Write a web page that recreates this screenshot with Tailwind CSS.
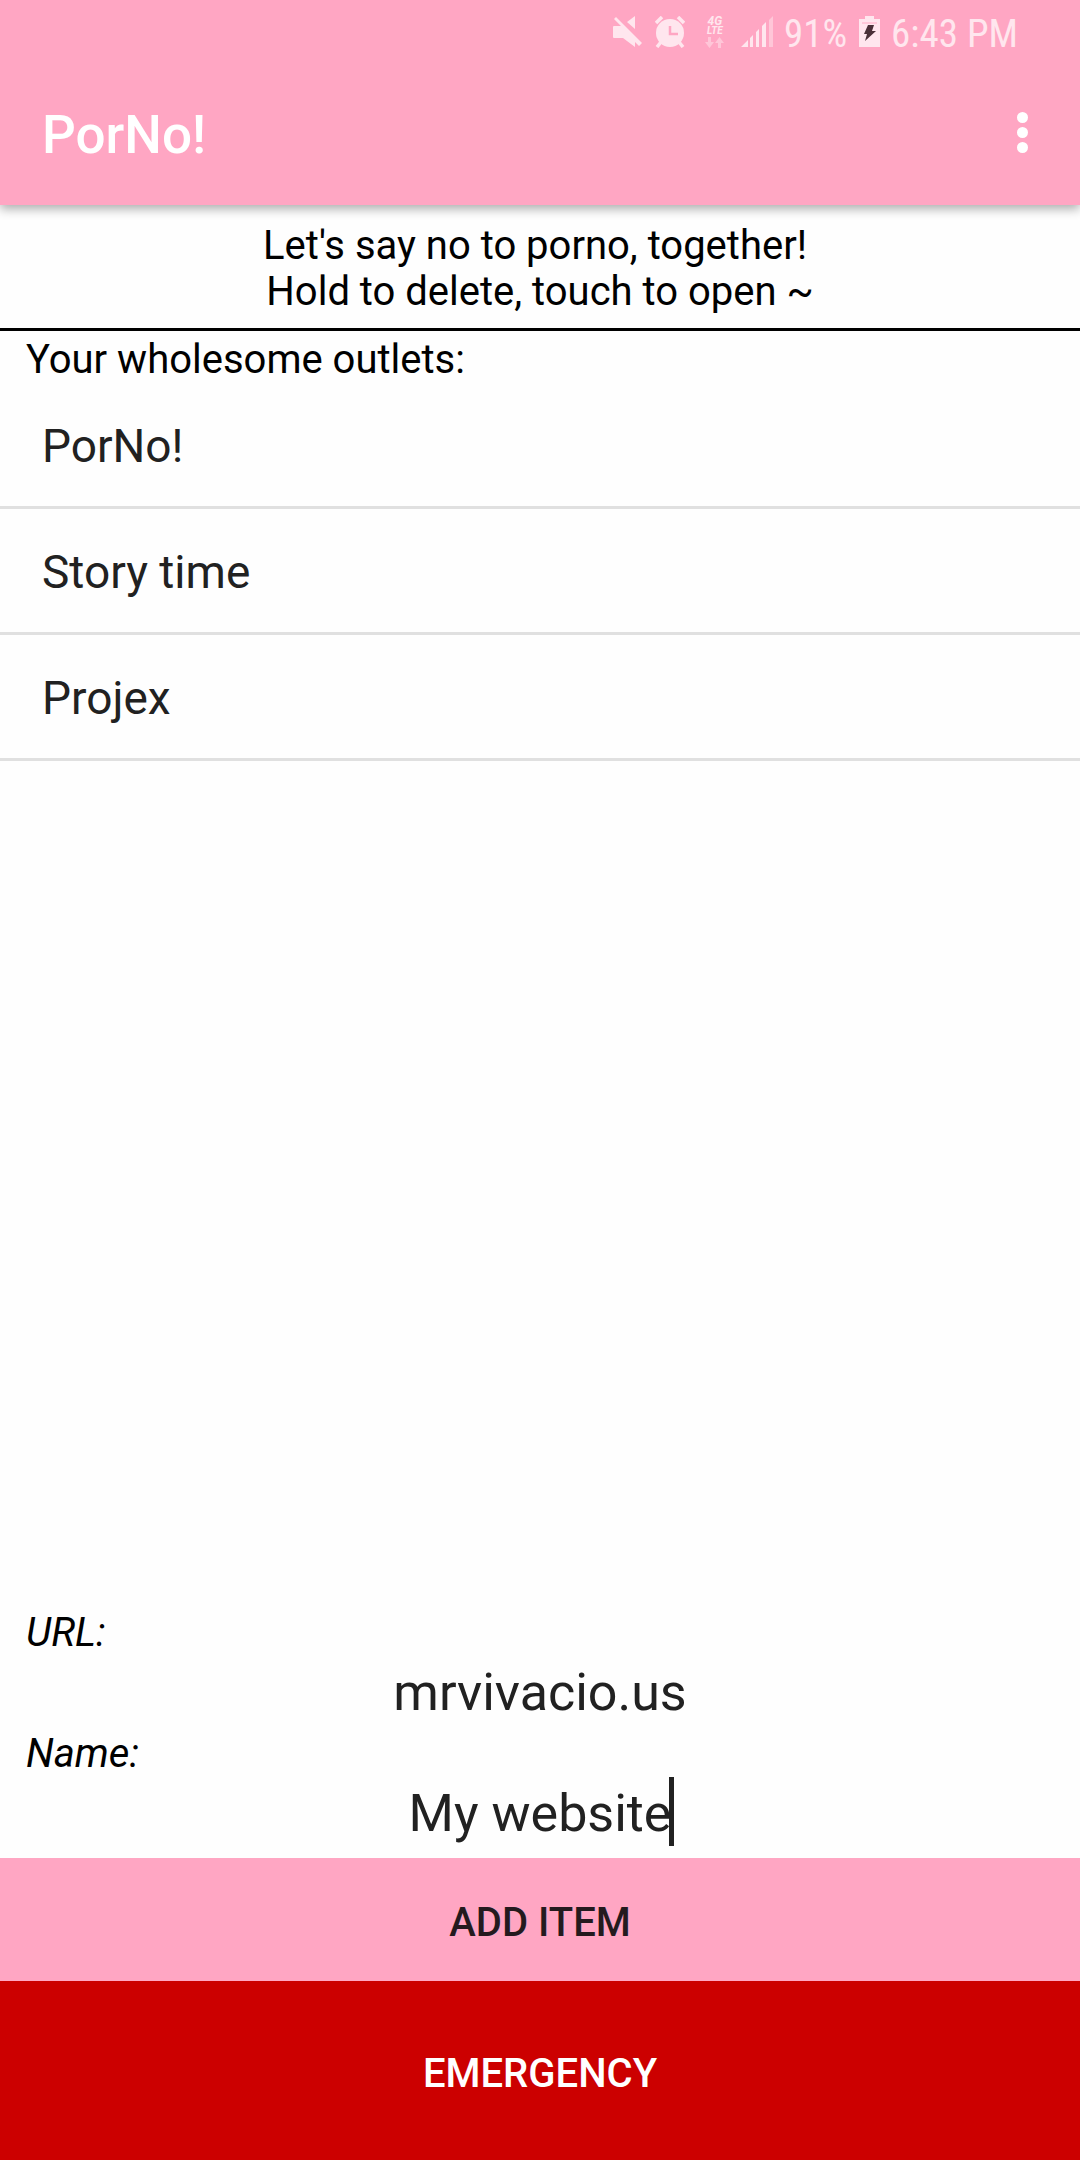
<!DOCTYPE html>
<html lang="en">
<head>
<meta charset="utf-8">
<meta name="viewport" content="width=device-width, initial-scale=1">
<title>PorNo!</title>
<script src="https://cdn.jsdelivr.net/npm/@tailwindcss/browser@4"></script>
</head>
<body class="flex min-h-screen flex-col bg-[#fefefe] font-['Roboto',sans-serif] text-[40px] leading-[46px] text-black">

<header class="relative bg-[#ffa6c3] text-white shadow-[0_4px_10px_rgba(0,0,0,0.32)]">
  <div class="flex h-[64px] items-center justify-end pr-[62px] font-['Roboto_Condensed','Roboto',sans-serif] text-[39px] text-[#ffe6ee]">
    <!-- sound off -->
    <svg class="mr-3 h-8 w-[30px]" viewBox="0 0 30 32" fill="currentColor" aria-label="Muted">
      <path d="M1 10h7L1 3l2-2 26 26-3 3-4-4v5L10 22H1a1 1 0 0 1-1-1V11a1 1 0 0 1 1-1zM22 0v13L14 6z"/>
    </svg>
    <!-- alarm -->
    <svg class="mr-5 h-8 w-[30px]" viewBox="0 0 30 32" aria-label="Alarm">
      <g stroke="currentColor" stroke-width="3.5" fill="none"><path d="M1 7l6-6M23 1l6 6M6 26l-4 5M24 26l4 5"/></g>
      <circle cx="15" cy="17" r="14" fill="currentColor"/>
      <path d="M15 10v8h8" stroke="#ffa6c3" stroke-width="2.5" fill="none"/>
    </svg>
    <!-- network type with data arrows -->
    <div class="mr-4 flex w-5 flex-col items-center font-['Roboto',sans-serif] text-[10px] leading-[9px] font-bold italic">
      <span class="text-[12px] leading-[10px]">4G</span><span>LTE</span>
      <svg class="mt-[2px] h-[11px] w-[19px] text-[#ffc6d8]" viewBox="0 0 19 11" fill="currentColor"><path d="M3 0h3v5h3l-4.500 6L0 5h3zM13 11h3V6h3l-4.500-6L10 6h3z"/></svg>
    </div>
    <!-- signal strength -->
    <svg class="mr-[11px] h-8 w-8" viewBox="0 0 32 32" fill="currentColor" aria-label="Signal">
      <path d="M0 31l7-7v7zM9 22l3-3v12H9zM15 16l3-3v18h-3zM21 10l4-4v25h-4z"/>
      <path d="M28 4l4-4v31h-4z" fill="#ffc6d8"/>
    </svg>
    <span class="mr-3 pt-1">91%</span>
    <!-- battery charging -->
    <svg class="mr-[11px] h-8 w-[21px]" viewBox="0 0 21 32" aria-label="Charging">
      <path d="M6 0h9v3h6v28H0V3h6z" fill="currentColor"/>
      <path d="M3 7h15" stroke="#ffbfd3" stroke-width="1.500"/>
      <path d="M9 9h6l-2 6h4L6 25l2-7H5z" fill="#4a3038"/>
    </svg>
    <span class="pt-1">6:43 PM</span>
  </div>
  <div class="flex h-[141px] items-center justify-between pr-[36px] pl-[42px]">
    <h1 class="text-[53px] leading-[60px] font-medium">PorNo!</h1>
    <button type="button" aria-label="More options" class="mb-1 flex w-11 flex-col items-center gap-1">
      <span class="size-[11px] rounded-full bg-white"></span>
      <span class="size-[11px] rounded-full bg-white"></span>
      <span class="size-[11px] rounded-full bg-white"></span>
    </button>
  </div>
</header>

<main class="flex grow flex-col">
  <p class="border-b-[3px] border-black pt-[18px] pb-[13px] text-center">Let's say no to porno, together!&nbsp;<br>Hold to delete, touch to open ~</p>

  <h2 class="px-[26px] pt-[6px]">Your wholesome outlets:</h2>
  <ul class="text-[46px] leading-[54px] text-[#212121]">
    <li class="flex h-[126px] items-center border-b-[3px] border-[#e0e0e0] px-[42px] pt-[3px]"><a href="#">PorNo!</a></li>
    <li class="flex h-[126px] items-center border-b-[3px] border-[#e0e0e0] px-[42px] pt-[3px]"><a href="#">Story time</a></li>
    <li class="flex h-[126px] items-center border-b-[3px] border-[#e0e0e0] px-[42px] pt-[3px]"><a href="#">Projex</a></li>
  </ul>

  <form class="mt-auto flex flex-col">
    <label for="url" class="px-[26px] italic">URL:</label>
    <div class="flex h-[75px] justify-center text-[52px] leading-[74px] text-[#212121]">
      <input id="url" type="text" value="mrvivacio.us" class="h-[74px] field-sizing-content text-center outline-none">
    </div>
    <label for="name" class="px-[26px] italic">Name:</label>
    <div class="flex h-[81px] justify-center text-[52px] leading-[74px] text-[#212121]">
      <div class="relative h-[74px]">
        <input id="name" type="text" value="My website" class="h-[74px] field-sizing-content text-center outline-none">
        <span class="absolute top-0 right-[-3px] h-[69px] w-[5px] bg-[#212121]"></span>
      </div>
    </div>
    <button type="submit" class="h-[123px] bg-[#ffa6c3] pt-[6px] font-medium text-[#241a1e]">ADD ITEM</button>
    <button type="button" class="h-[179px] bg-[#cc0000] pt-[6px] font-medium text-white">EMERGENCY</button>
  </form>
</main>
</body>
</html>
